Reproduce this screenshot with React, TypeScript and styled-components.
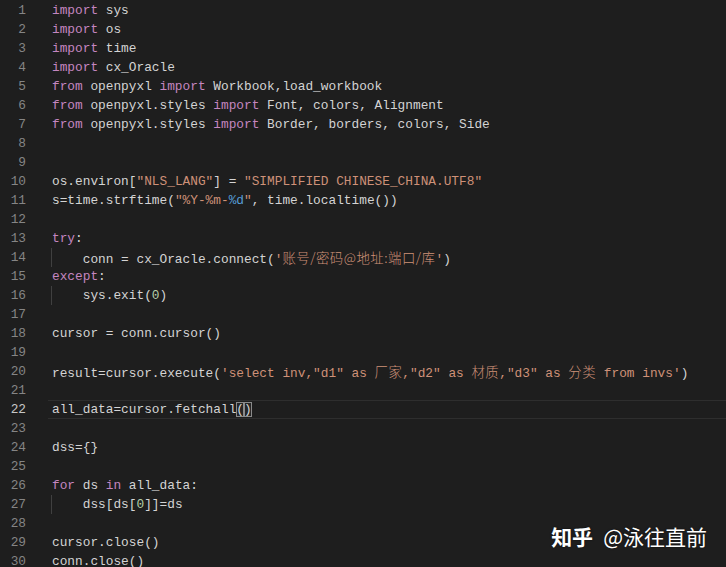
import React from "react";
import styled, { createGlobalStyle } from "styled-components";

const Global = createGlobalStyle`
  html, body { margin: 0; padding: 0; background: #1e1e1e; }
  body { width: 726px; height: 567px; overflow: hidden; }
`;

type Kind = "t" | "k" | "s" | "n" | "f" | "c" | "b";
type Tok = [Kind, string];

const colors: Record<Kind, string> = {
  t: "#d4d4d4",
  k: "#c586c0",
  s: "#ce9178",
  n: "#b5cea8",
  f: "#569cd6",
  c: "#ce9178",
  b: "#d4d4d4",
};

const lines: { toks: Tok[]; guide?: boolean }[] = [
  { toks: [["k", "import"], ["t", " sys"]] },
  { toks: [["k", "import"], ["t", " os"]] },
  { toks: [["k", "import"], ["t", " time"]] },
  { toks: [["k", "import"], ["t", " cx_Oracle"]] },
  { toks: [["k", "from"], ["t", " openpyxl "], ["k", "import"], ["t", " Workbook,load_workbook"]] },
  { toks: [["k", "from"], ["t", " openpyxl.styles "], ["k", "import"], ["t", " Font, colors, Alignment"]] },
  { toks: [["k", "from"], ["t", " openpyxl.styles "], ["k", "import"], ["t", " Border, borders, colors, Side"]] },
  { toks: [] },
  { toks: [] },
  { toks: [["t", "os.environ["], ["s", "\"NLS_LANG\""], ["t", "] = "], ["s", "\"SIMPLIFIED CHINESE_CHINA.UTF8\""]] },
  { toks: [["t", "s=time.strftime("], ["s", "\"%Y-%m-"], ["f", "%d"], ["s", "\""], ["t", ", time.localtime())"]] },
  { toks: [] },
  { toks: [["k", "try"], ["t", ":"]] },
  { guide: true, toks: [["t", "    conn = cx_Oracle.connect("], ["s", "'"], ["c", "账号/密码@地址:端口/库"], ["s", "'"], ["t", ")"]] },
  { toks: [["k", "except"], ["t", ":"]] },
  { guide: true, toks: [["t", "    sys.exit("], ["n", "0"], ["t", ")"]] },
  { toks: [] },
  { toks: [["t", "cursor = conn.cursor()"]] },
  { toks: [] },
  {
    toks: [
      ["t", "result=cursor.execute("],
      ["s", "'select inv,\"d1\" as "],
      ["c", "厂家"],
      ["s", ",\"d2\" as "],
      ["c", "材质"],
      ["s", ",\"d3\" as "],
      ["c", "分类"],
      ["s", " from invs'"],
      ["t", ")"],
    ],
  },
  { toks: [] },
  { toks: [["t", "all_data=cursor.fetchall"], ["b", "("], ["b", ")"]] },
  { toks: [] },
  { toks: [["t", "dss={}"]] },
  { toks: [] },
  { toks: [["k", "for"], ["t", " ds "], ["k", "in"], ["t", " all_data:"]] },
  { guide: true, toks: [["t", "    dss[ds["], ["n", "0"], ["t", "]]=ds"]] },
  { toks: [] },
  { toks: [["t", "cursor.close()"]] },
  { toks: [["t", "conn.close()"]] },
];

const CURRENT = 22;

const Editor = styled.div`
  position: relative;
  width: 726px;
  height: 567px;
  background: #1e1e1e;
  padding-top: 1px;
  box-sizing: border-box;
  font-family: "Liberation Mono", "DejaVu Sans Mono", monospace;
  font-size: 12.8px;
  overflow: hidden;
`;

const Row = styled.div`
  display: flex;
  height: 19px;
  line-height: 19px;
  white-space: pre;
`;

const Gutter = styled.div<{ $active: boolean }>`
  width: 26px;
  flex: none;
  text-align: right;
  color: ${(p) => (p.$active ? "#c6c6c6" : "#858585")};
`;

const Spacer = styled.div`
  width: 22px;
  flex: none;
`;

const Code = styled.div<{ $active: boolean; $guide: boolean }>`
  position: relative;
  flex: 1;
  padding-left: 4px;
  box-sizing: border-box;
  border-top: 1px solid ${(p) => (p.$active ? "#2e2e2e" : "transparent")};
  border-bottom: 1px solid ${(p) => (p.$active ? "#2e2e2e" : "transparent")};
  line-height: 17px;
  &::before {
    content: "";
    display: ${(p) => (p.$guide ? "block" : "none")};
    position: absolute;
    left: 3px;
    top: -1px;
    bottom: -1px;
    width: 1px;
    background: #404040;
  }
`;

const Token = styled.span<{ $kind: Kind }>`
  color: ${(p) => colors[p.$kind]};
  ${(p) =>
    p.$kind === "c"
      ? `font-family: "Noto Sans CJK SC", sans-serif; font-size: 13.4px; letter-spacing: 0.5px; font-weight: 300;`
      : ""}
  ${(p) =>
    p.$kind === "b"
      ? `outline: 1px solid #8a8a8a; outline-offset: -1px; background: rgba(255,255,255,0.04);`
      : ""}
`;

const Watermark = styled.div`
  position: absolute;
  right: 19px;
  bottom: 18px;
  color: #ffffff;
  font-family: "Noto Sans CJK SC", sans-serif;
  font-size: 21px;
  line-height: 26px;
  white-space: pre;
  text-shadow: 0 0 2px rgba(0, 0, 0, 0.6);
`;

const Brand = styled.span`
  font-weight: 700;
  margin-right: 10px;
`;

export default function App() {
  return (
    <>
      <Global />
      <Editor>
        {lines.map((l, i) => {
          const n = i + 1;
          const active = n === CURRENT;
          return (
            <Row key={n}>
              <Gutter $active={active}>{n}</Gutter>
              <Spacer />
              <Code $active={active} $guide={!!l.guide}>
                {l.toks.map((t, j) => (
                  <Token key={j} $kind={t[0]}>
                    {t[1]}
                  </Token>
                ))}
              </Code>
            </Row>
          );
        })}
        <Watermark>
          <Brand>知乎</Brand>@泳往直前
        </Watermark>
      </Editor>
    </>
  );
}
